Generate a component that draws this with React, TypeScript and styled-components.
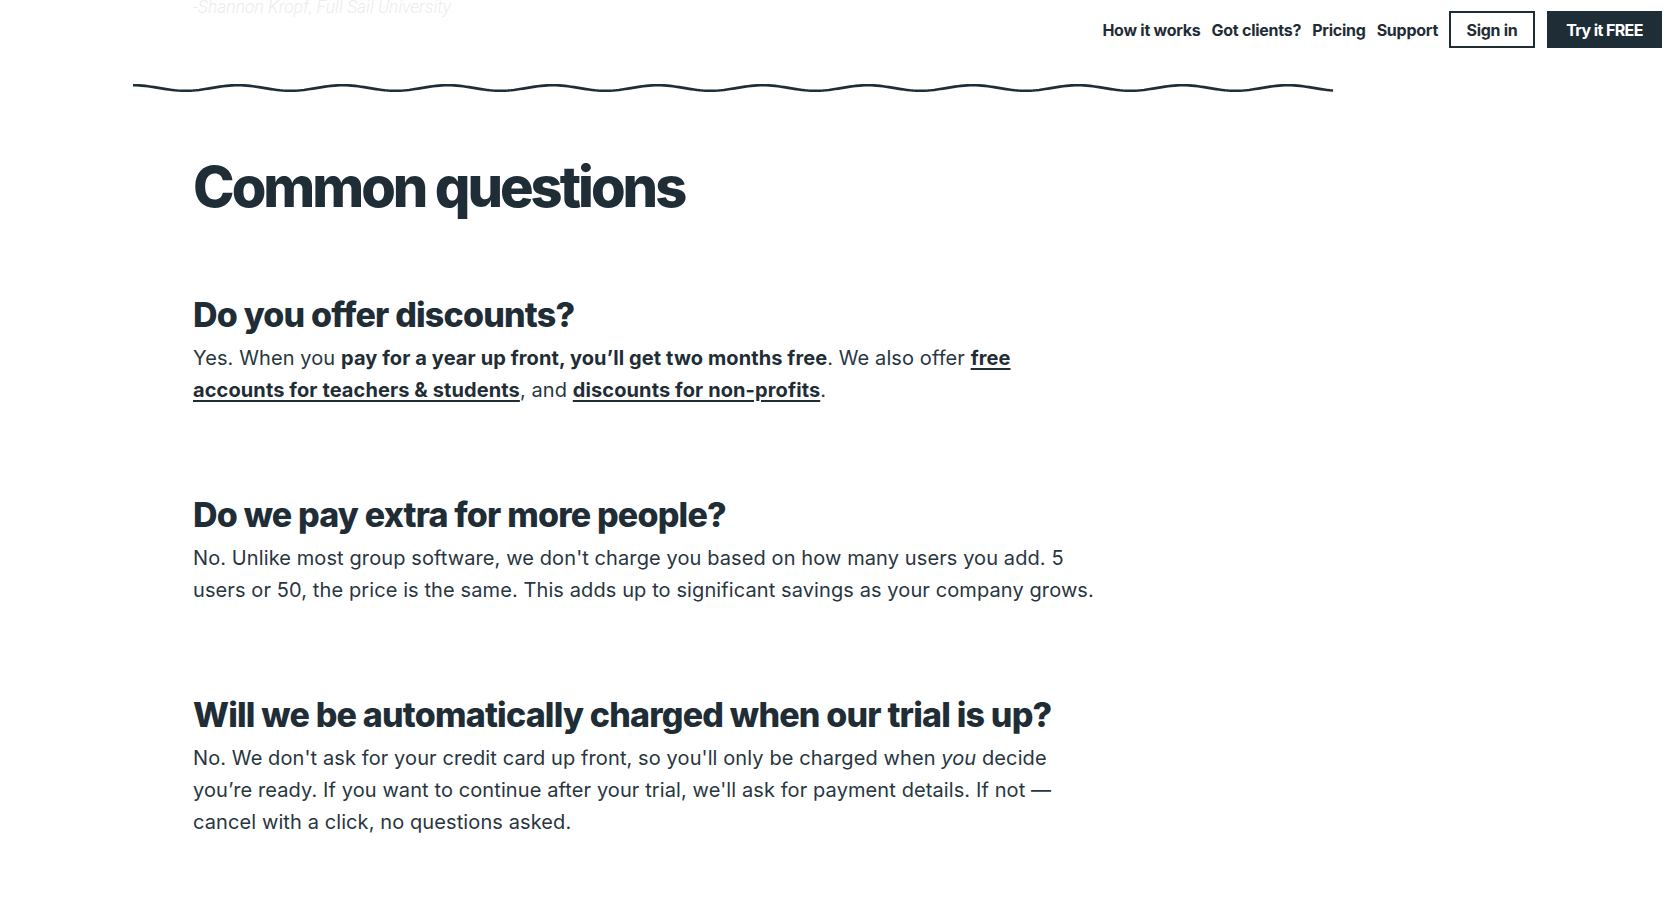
import React from 'react';
import styled, { createGlobalStyle } from 'styled-components';

const ink = '#1f2d36';

const GlobalStyle = createGlobalStyle`
  html, body {
    margin: 0;
    padding: 0;
    background: #ffffff;
  }
  body {
    font-family: Inter, "Noto Sans", Arial, sans-serif;
    color: ${ink};
    -webkit-font-smoothing: antialiased;
  }
  * {
    box-sizing: border-box;
  }
`;

const Page = styled.div`
  position: relative;
  min-height: 906px;
  overflow: hidden;
`;

const Header = styled.nav`
  position: absolute;
  top: 11px;
  right: 7px;
  display: flex;
  align-items: center;
  gap: 11px;
  z-index: 2;
`;

const NavLink = styled.a`
  font-size: 16px;
  font-weight: 650;
  letter-spacing: -0.25px;
  color: ${ink};
  text-decoration: none;
  white-space: nowrap;
`;

const NavButton = styled.a<{ $filled?: boolean }>`
  display: flex;
  align-items: center;
  justify-content: center;
  height: 37px;
  width: ${({ $filled }) => ($filled ? '115px' : '86px')};
  margin-left: ${({ $filled }) => ($filled ? '1px' : '0')};
  border: 2px solid ${ink};
  background: ${({ $filled }) => ($filled ? ink : '#ffffff')};
  color: ${({ $filled }) => ($filled ? '#ffffff' : ink)};
  font-size: 16px;
  font-weight: ${({ $filled }) => ($filled ? 700 : 650)};
  letter-spacing: ${({ $filled }) => ($filled ? '-0.6px' : '-0.3px')};
  text-decoration: none;
  white-space: nowrap;
`;

const QuoteTail = styled.p`
  margin: -3px 0 0 193px;
  font-family: Roboto, "Liberation Sans", sans-serif;
  font-style: italic;
  font-weight: 300;
  font-size: 17.5px;
  line-height: 21px;
  color: #ececec;
`;

const Divider = styled.svg`
  display: block;
  margin: 63px 0 0 133px;
`;

const Content = styled.section`
  padding: 0 0 80px 193px;
`;

const Title = styled.h1`
  margin: 62px 0 0;
  font-size: 56px;
  line-height: 1.1;
  font-weight: 800;
  letter-spacing: -3px;
  color: ${ink};
`;

const FaqList = styled.div`
  display: flex;
  flex-direction: column;
  gap: 90px;
  margin-top: 77px;
`;

const Faq = styled.article`
  display: flex;
  flex-direction: column;
  gap: 8px;
`;

const Question = styled.h2`
  margin: 0;
  font-size: 34px;
  line-height: 38px;
  font-weight: 800;
  letter-spacing: -0.8px;
  color: ${ink};
`;

const Answer = styled.p`
  margin: 0;
  max-width: 902px;
  font-size: 20px;
  line-height: 32px;
  font-weight: 400;
  letter-spacing: 0.1px;
  color: #28363f;

  strong {
    font-weight: 700;
    color: ${ink};
  }

  a {
    font-weight: 700;
    color: ${ink};
    text-decoration: underline;
    text-decoration-thickness: 2px;
    text-underline-offset: 3px;
  }
`;

const wavePath = (() => {
  const width = 1200;
  const period = 105;
  const amp = 2.8;
  const mid = 7;
  let d = '';
  for (let x = 0; x <= width; x += 3) {
    const y = mid + amp * Math.cos(((x + 8) / period) * Math.PI * 2 + Math.PI * 0.85);
    d += `${x === 0 ? 'M' : 'L'}${x},${y.toFixed(2)} `;
  }
  return d;
})();

const App: React.FC = () => {
  return (
    <Page>
      <GlobalStyle />
      <Header>
        <NavLink href="#">How it works</NavLink>
        <NavLink href="#">Got clients?</NavLink>
        <NavLink href="#">Pricing</NavLink>
        <NavLink href="#">Support</NavLink>
        <NavButton href="#">Sign in</NavButton>
        <NavButton href="#" $filled>
          Try it FREE
        </NavButton>
      </Header>

      <QuoteTail>-Shannon Kropf, Full Sail University</QuoteTail>

      <Divider width="1200" height="14" viewBox="0 0 1200 14">
        <path d={wavePath} fill="none" stroke={ink} strokeWidth="2.6" strokeLinecap="round" />
      </Divider>

      <Content>
        <Title>Common questions</Title>
        <FaqList>
          <Faq>
            <Question>Do you offer discounts?</Question>
            <Answer>
              Yes. When you <strong>pay for a year up front, you’ll get two months free</strong>. We also
              offer <a href="#">free accounts for teachers &amp; students</a>, and{' '}
              <a href="#">discounts for non-profits</a>.
            </Answer>
          </Faq>
          <Faq>
            <Question>Do we pay extra for more people?</Question>
            <Answer>
              No. Unlike most group software, we don't charge you based on how many users you add. 5
              users or 50, the price is the same. This adds up to significant savings as your company
              grows.
            </Answer>
          </Faq>
          <Faq>
            <Question>Will we be automatically charged when our trial is up?</Question>
            <Answer>
              No. We don't ask for your credit card up front, so you'll only be charged when <em>you</em>{' '}
              decide you’re ready. If you want to continue after your trial, we'll ask for payment
              details. If not — cancel with a click, no questions asked.
            </Answer>
          </Faq>
        </FaqList>
      </Content>
    </Page>
  );
};

export default App;
